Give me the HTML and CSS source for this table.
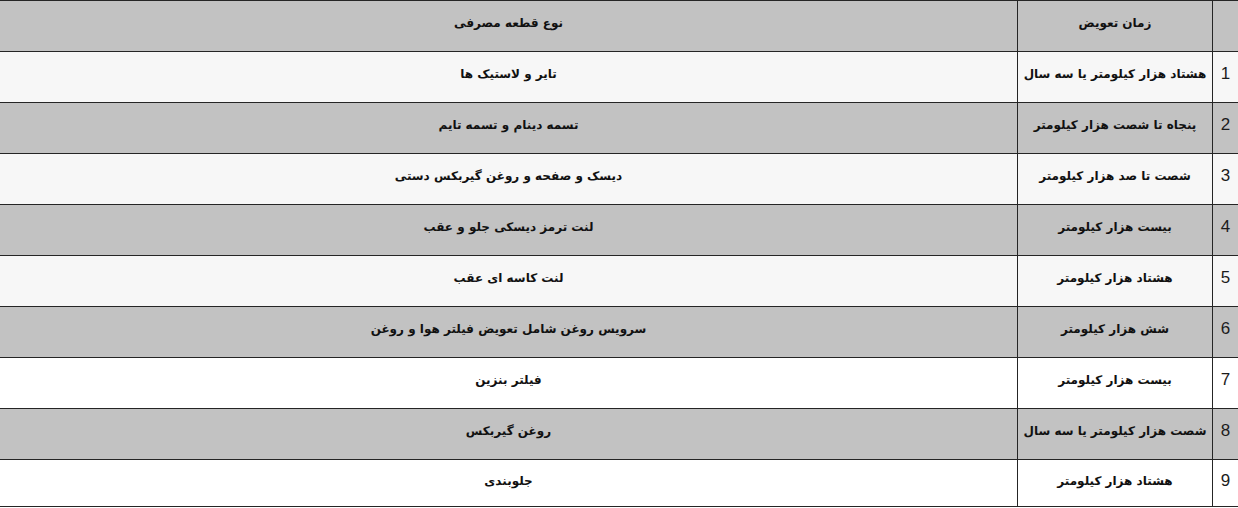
FILE: index.html
```html
<!DOCTYPE html>
<html lang="fa" dir="rtl">
<head>
<meta charset="utf-8">
<title>جدول تعویض قطعات</title>
<link rel="stylesheet" href="styles.css">
</head>
<body>
<table class="parts">
  <tr class="row grey">
    <td class="num"></td>
    <td class="time">زمان تعویض</td>
    <td class="part">نوع قطعه مصرفی</td>
  </tr>
  <tr class="row light">
    <td class="num">1</td>
    <td class="time">هشتاد هزار کیلومتر یا سه سال</td>
    <td class="part">تایر و لاستیک ها</td>
  </tr>
  <tr class="row grey">
    <td class="num">2</td>
    <td class="time">پنجاه تا شصت هزار کیلومتر</td>
    <td class="part">تسمه دینام و تسمه تایم</td>
  </tr>
  <tr class="row light">
    <td class="num">3</td>
    <td class="time">شصت تا صد هزار کیلومتر</td>
    <td class="part">دیسک و صفحه و روغن گیربکس دستی</td>
  </tr>
  <tr class="row grey">
    <td class="num">4</td>
    <td class="time">بیست هزار کیلومتر</td>
    <td class="part">لنت ترمز دیسکی جلو و عقب</td>
  </tr>
  <tr class="row light">
    <td class="num">5</td>
    <td class="time">هشتاد هزار کیلومتر</td>
    <td class="part">لنت کاسه ای عقب</td>
  </tr>
  <tr class="row grey">
    <td class="num">6</td>
    <td class="time">شش هزار کیلومتر</td>
    <td class="part">سرویس روغن شامل تعویض فیلتر هوا و روغن</td>
  </tr>
  <tr class="row white">
    <td class="num">7</td>
    <td class="time">بیست هزار کیلومتر</td>
    <td class="part">فیلتر بنزین</td>
  </tr>
  <tr class="row grey">
    <td class="num">8</td>
    <td class="time">شصت هزار کیلومتر یا سه سال</td>
    <td class="part">روغن گیربکس</td>
  </tr>
  <tr class="row white last">
    <td class="num">9</td>
    <td class="time">هشتاد هزار کیلومتر</td>
    <td class="part">جلوبندی</td>
  </tr>
</table>
</body>
</html>
```

FILE: styles.css
```css
html, body {
  margin: 0;
  padding: 0;
  background: #ffffff;
}

.parts {
  width: 1238px;
  border-collapse: collapse;
  table-layout: fixed;
  font-family: "DejaVu Sans", "Liberation Sans", sans-serif;
  color: #111;
}

.row td {
  height: 43px;
  padding: 0 0 7px 0;
  border-top: 1px solid #252525;
  border-bottom: 1px solid #252525;
  text-align: center;
  vertical-align: middle;
}

.last td {
  height: 41px;
  padding: 0 0 5px 0;
}

.grey { background: #c2c2c2; }
.light { background: #f7f7f7; }
.white { background: #ffffff; }

.num {
  width: 25px;
  font-family: "Liberation Sans", Arial, sans-serif;
  font-size: 17px;
  font-weight: normal;
  color: #1c1c1c;
  border-left: 1px solid #252525;
}

.time {
  width: 194px;
  font-size: 12px;
  font-weight: bold;
  border-left: 1px solid #252525;
}

.part {
  font-size: 12px;
  font-weight: bold;
}
```
